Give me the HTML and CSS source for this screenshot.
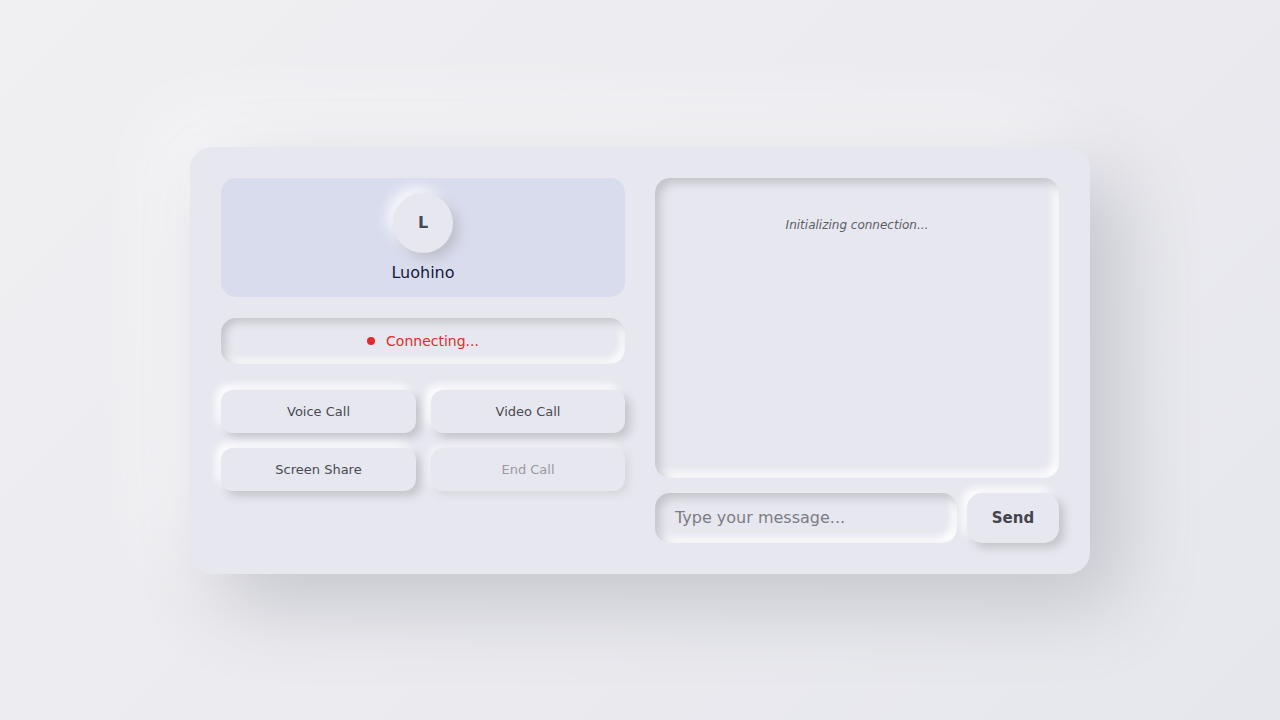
FILE: index.html
```html
<!DOCTYPE html>
<html lang="en">
<head>
<meta charset="utf-8">
<title>Call</title>
<link rel="stylesheet" href="styles.css">
</head>
<body>
<div class="card">
  <div class="col left">
    <div class="profile">
      <div class="avatar">L</div>
      <div class="name">Luohino</div>
    </div>
    <div class="status"><span class="dot"></span><span>Connecting...</span></div>
    <div class="actions">
      <button class="btn">Voice Call</button>
      <button class="btn">Video Call</button>
      <button class="btn">Screen Share</button>
      <button class="btn disabled">End Call</button>
    </div>
  </div>
  <div class="col right">
    <div class="chat">
      <div class="sys">Initializing connection...</div>
    </div>
    <div class="composer">
      <div class="input">Type your message...</div>
      <button class="send">Send</button>
    </div>
  </div>
</div>
</body>
</html>
```
FILE: styles.css
```css
* { box-sizing: border-box; }
html, body { margin: 0; height: 100%; }
body {
  font-family: "DejaVu Sans", Verdana, sans-serif;
  background: linear-gradient(135deg, #f0f0f3 0%, #ebebf0 50%, #e6e7ed 100%);
  display: flex;
  align-items: center;
  justify-content: center;
}
.card {
  width: 900px;
  background: #e6e7ef;
  border-radius: 22px;
  padding: 31px;
  display: grid;
  grid-template-columns: 404px 404px;
  column-gap: 30px;
  box-shadow: 30px 30px 80px #c4c5cc, -25px -25px 70px #f8f8fa;
}
.col { display: flex; flex-direction: column; }
.profile {
  background: #d9dced;
  border-radius: 15px;
  height: 119px;
  padding-top: 15px;
  display: flex;
  flex-direction: column;
  align-items: center;
}
.avatar {
  width: 60px; height: 60px; border-radius: 50%;
  background: #e6e7ef;
  display: flex; align-items: center; justify-content: center;
  font-weight: bold; font-size: 16px; color: #444a55;
  box-shadow: 6px 6px 12px #bfc1cc, -6px -6px 12px #f6f7fb;
}
.name {
  margin-top: 10px;
  font-size: 16px;
  color: #141a3a;
  line-height: 20px;
}
.status {
  margin-top: 21px;
  height: 46px;
  border-radius: 15px;
  background: #e6e7ef;
  box-shadow: inset 4px 4px 8px #c3c4ca, inset -4px -4px 8px #ffffff;
  display: flex; align-items: center; justify-content: center;
  gap: 11px;
  color: #e22b2b;
  font-size: 14px;
}
.dot { width: 8px; height: 8px; border-radius: 50%; background: #e22b2b; }
.actions {
  margin-top: 26px;
  display: grid;
  grid-template-columns: 195px 194px;
  column-gap: 15px;
  row-gap: 15px;
}
.btn {
  height: 43px;
  border: none;
  border-radius: 12px;
  background: #e6e7ef;
  font-family: inherit;
  font-size: 13px;
  color: #4a4a52;
  box-shadow: 5px 5px 10px #c3c4ca, -5px -5px 10px #ffffff;
}
.btn.disabled { color: #9a9aa0; box-shadow: 3px 3px 8px #d3d4da, -3px -3px 8px #f7f7fa; }
.chat {
  height: 300px;
  border-radius: 15px;
  background: #e6e7ef;
  box-shadow: inset 5px 5px 10px #c3c4ca, inset -5px -5px 10px #ffffff;
  padding-top: 40px;
  text-align: center;
}
.sys { font-size: 12px; font-style: italic; color: #5e5e66; }
.composer {
  margin-top: 15px;
  display: flex;
  gap: 10px;
  height: 50px;
}
.input {
  flex: 1;
  border-radius: 15px;
  background: #e6e7ef;
  box-shadow: inset 5px 5px 10px #c3c4ca, inset -5px -5px 10px #ffffff;
  padding-left: 20px;
  display: flex; align-items: center;
  font-size: 16px;
  color: #7c7c84;
}
.send {
  width: 92px;
  border: none;
  border-radius: 15px;
  background: #e6e7ef;
  font-family: inherit;
  font-size: 15px;
  font-weight: bold;
  color: #44444c;
  box-shadow: 5px 5px 10px #c3c4ca, -5px -5px 10px #ffffff;
}
```
